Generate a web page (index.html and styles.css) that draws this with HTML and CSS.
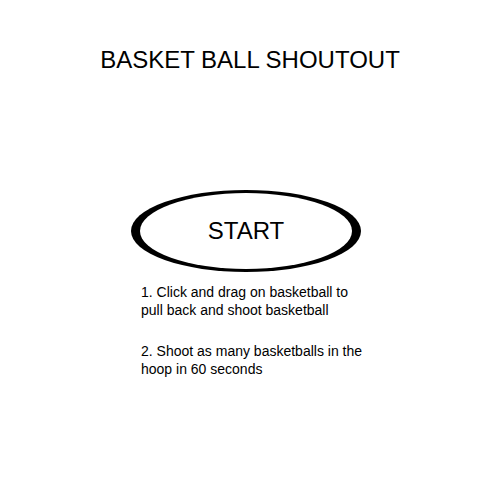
FILE: index.html
```html
<!DOCTYPE html>
<html>
<head>
<meta charset="utf-8">
<link rel="stylesheet" href="styles.css">
</head>
<body>
<div class="page">
  <h1 class="title">BASKET BALL SHOUTOUT</h1>
  <div class="start">
    <svg class="start-ring" width="232" height="84" viewBox="0 0 232 84">
      <ellipse cx="116" cy="42" rx="115" ry="41" fill="#000"/>
      <ellipse cx="116" cy="42" rx="106" ry="38" fill="#fff"/>
    </svg>
    <span class="start-label">START</span>
  </div>
  <div class="instructions">
    <p class="step">1. Click and drag on basketball to pull back and shoot basketball</p>
    <p class="step">2. Shoot as many basketballs in the hoop in 60 seconds</p>
  </div>
</div>
</body>
</html>
```
FILE: styles.css
```css
html, body {
  margin: 0;
  padding: 0;
  background: #fff;
}
.page {
  width: 500px;
  height: 500px;
  display: flex;
  flex-direction: column;
  align-items: center;
  font-family: "Liberation Sans", Arial, sans-serif;
  color: #000;
}
.title {
  margin: 46px 0 0 0;
  font-size: 24px;
  font-weight: normal;
  line-height: 28px;
  text-align: center;
}
.start {
  position: relative;
  margin-top: 115px;
  margin-left: -8px;
  width: 232px;
  height: 84px;
  display: flex;
  align-items: center;
  justify-content: center;
}
.start-ring {
  position: absolute;
  left: 0;
  top: 0;
}
.start-label {
  position: relative;
  font-size: 24px;
  line-height: 28px;
}
.instructions {
  align-self: flex-start;
  margin: 10px 0 0 141px;
  width: 225px;
}
.step {
  margin: 0 0 23px 0;
  font-size: 14px;
  line-height: 18px;
}
```
